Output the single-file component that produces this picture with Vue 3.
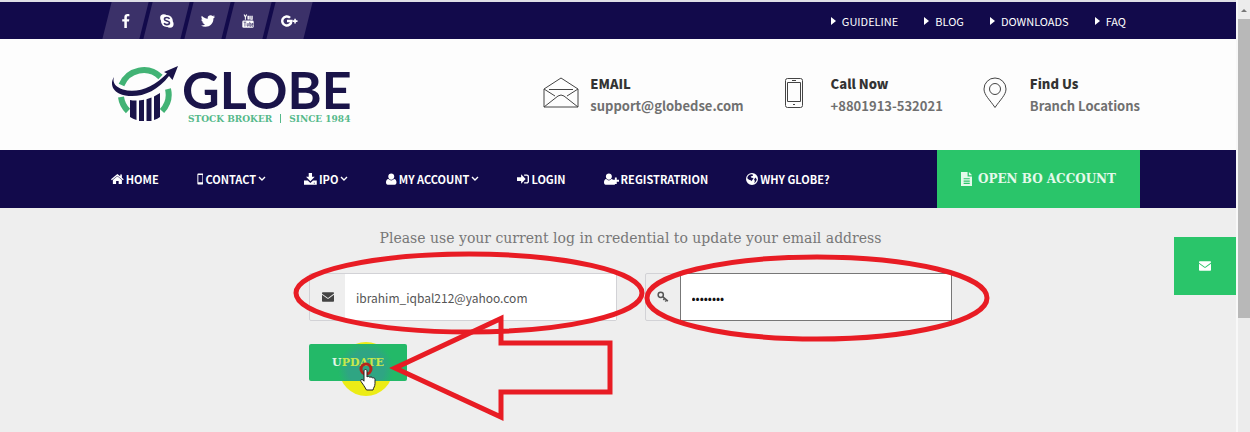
<script setup>
import { ref } from 'vue'

const email = ref('ibrahim_iqbal212@yahoo.com')
const password = ref('password')

const socials = [
  { name: 'Facebook', icon: 'facebook' },
  { name: 'Skype', icon: 'skype' },
  { name: 'Twitter', icon: 'twitter' },
  { name: 'YouTube', icon: 'youtube' },
  { name: 'Google Plus', icon: 'google' },
]

const topLinks = ['GUIDELINE', 'BLOG', 'DOWNLOADS', 'FAQ']

const menu = [
  { label: 'HOME', icon: 'home' },
  { label: 'CONTACT', icon: 'mobile', children: true },
  { label: 'IPO', icon: 'download', children: true },
  { label: 'MY ACCOUNT', icon: 'user', children: true },
  { label: 'LOGIN', icon: 'login' },
  { label: 'REGISTRATRION', icon: 'userplus' },
  { label: 'WHY GLOBE?', icon: 'globe' },
]

// [viewBox width, path], all 16 units tall
const icons = {
  facebook: [9, 'M8.600 .2v2.500H7.100c-1.200 0-1.400.6-1.400 1.400v1.800h2.800L8.100 8.700H5.700V16H2.800V8.700H.4V5.900h2.400V3.800C2.800 1.400 4.300.1 6.400.1c1 0 1.900.1 2.200.1z'],
  twitter: [16, 'M16 3.400c-.5.7-1 1.300-1.700 1.700.3 5-3.600 9.400-9.100 9.400-1.900 0-3.700-.5-5.200-1.500 1.800.2 3.500-.3 4.800-1.400-1.500 0-2.600-1-3.100-2.200.5.1 1 .1 1.500-.1C1.500 8.900.5 7.500.6 6c.4.3.9.400 1.500.4C.6 5.300.2 3.400 1.100 1.900c1.700 2 4 3.300 6.800 3.400C7.300 3 9 1.300 11.100 1.300c.9 0 1.800.4 2.400 1 .7-.1 1.500-.4 2.100-.8-.3.800-.8 1.400-1.500 1.800.7-.1 1.300-.2 1.900-.4z'],
  home: [17, 'M8.500 4.300 2.500 9.300v5.200h4.300v-4h3.400v4h4.300V9.300zM8.500 1.200 0 8.400l1.100 1.300 7.400-6.200 7.400 6.200L17 8.400l-2.500-2.200V2h-2.200v2.400z'],
  mobile: [9, 'M1.800.8h5.400c.7 0 1.300.6 1.300 1.300v11.800c0 .7-.6 1.300-1.300 1.300H1.800c-.7 0-1.300-.6-1.300-1.300V2.100C.5 1.400 1.100.8 1.800.8zm0 2v9.400h5.400V2.800z'],
  download: [17, 'M6.300 0h4.400v5h3.600L8.500 11 2.700 5h3.600zM0 10h5l3.500 3.200L12 10h5v5.500H0zm13 3v1h1.500v-1z'],
  user: [14, 'M7 .5c2.400 0 4 1.700 4 4S9.400 9 7 9 3 6.900 3 4.500s1.600-4 4-4zM3.300 8c1 1.200 2.300 1.900 3.700 1.900S9.700 9.200 10.700 8c2.500.2 3.300 2.400 3.300 4.700 0 1.700-.8 2.800-2.400 2.800H2.400C.8 15.500 0 14.400 0 12.700 0 10.400.8 8.200 3.300 8z'],
  userplus: [20, 'M6.500.5c2.300 0 4 1.700 4 4S8.800 9 6.500 9s-4-2.100-4-4.500 1.700-4 4-4zM3 8c1 1.200 2.100 1.900 3.500 1.900S9 9.200 10 8c.6 0 1 .2 1.500.5v3h3v4H2.200C.8 15.500 0 14.200 0 12.700 0 10.400.8 8.200 3 8zm11.500-2H17v3h3v2.500h-3v3h-2.500v-3h-3V9h3z'],
  login: [16, 'M5.500 1.800 11.500 8l-6 6.200V10.500H0v-5h5.500zM9.500 2H13c1.700 0 3 1.200 3 2.800v6.400c0 1.600-1.300 2.800-3 2.800H9.500v-1.800H13c.7 0 1.200-.4 1.200-1V4.800c0-.6-.5-1-1.200-1H9.500z'],
  globe: [16, 'M8 0a8 8 0 1 1 0 16A8 8 0 0 1 8 0zM4.500 2.300C3 3.500 1.900 5 1.700 7l2.300 2 2.300.5.500 1.500 1.700-1.600 1.600-2.600-2.600-.6-1.400-1.200 1.700-1 1.600-.5-.4-1.500L7 1.600zM12.500 6l-1.700 2.500 1 2.300-.8 2.800c1.600-1.100 3.100-3 3.300-5.300z'],
  file: [13, 'M0 0h7.500v5H13v11H0zM9 0l4 3.800H9zM3 7v1.300h7V7zm0 2.700V11h7V9.700zm0 2.600v1.300h7v-1.300z'],
  mail: [16, 'M0 2.600C0 2 .5 1.800 1 1.800h14c.6 0 1 .3 1 .8v.8L8 9.200 0 3.500zM0 5l6.900 5c.7.5 1.500.5 2.200 0L16 5v8.200c0 .6-.4 1-1 1H1c-.6 0-1-.4-1-1z'],
}
</script>

<template>
  <div class="page">
    <div class="site">
      <div class="topbar container">
        <nav class="socials" aria-label="Social">
          <a v-for="s in socials" :key="s.name" href="#" class="social" :aria-label="s.name">
            <svg v-if="icons[s.icon]" class="icon" :viewBox="`0 0 ${icons[s.icon][0]} 16`">
              <path :d="icons[s.icon][1]" />
            </svg>
            <svg v-else-if="s.icon === 'skype'" class="icon" viewBox="0 0 16 16">
              <circle cx="8" cy="8" r="6.800" /><circle cx="4.500" cy="4.500" r="4.200" /><circle cx="11.500" cy="11.500" r="4.200" />
              <path class="cut" d="M11 5.600C10.500 4.500 9.500 4 8 4 6.300 4 5.200 4.700 5.200 5.900 5.200 8.500 11 7.300 11 10c0 1.300-1.300 2.100-3 2.100-1.600 0-2.700-.7-3.100-1.900" />
            </svg>
            <svg v-else-if="s.icon === 'youtube'" class="icon" viewBox="0 0 14 16">
              <path class="line" d="M2.500.5 4 3.500 5.500.5M4 3.500v3M7 2.500h1.300v3.300H7zM10.200 2v4h1.600V2" />
              <rect x=".5" y="7.500" width="13" height="8.300" rx="1.500" />
              <path class="cut thin" d="M2 9.300h3M3.500 9.300v5M6 10.500v3.300h1.300v-3.300M9 9v5h1.300v-3H9M12.800 12.300h-1.300v-1.500h1.200v1.500M11.500 12v2h1.300" />
            </svg>
            <svg v-else class="icon" viewBox="0 0 20 16">
              <path class="gplus" d="M10.500 4.300A5.200 5.200 0 1 0 12 8H7" />
              <path d="M15.300 5.300h1.800v1.900H19V9h-1.900v1.900h-1.800V9h-1.900V7.200h1.900z" />
            </svg>
          </a>
        </nav>
        <nav class="top-links" aria-label="Quick links">
          <a v-for="link in topLinks" :key="link" href="#">
            <svg class="caret" viewBox="0 0 5 8"><path d="M0 0l5 4-5 4z" /></svg>{{ link }}
          </a>
        </nav>
      </div>

      <header class="header container">
        <a href="#" class="logo" aria-label="Globe Stock Broker">
          <svg class="logo-mark" viewBox="0 0 68 58">
            <path class="ring" d="M10.500 20A24 24 0 0 1 49.500 12M57 24A24 24 0 0 1 51 46M10 32A24 24 0 0 0 17 46" />
            <path class="navy" d="M19 35q3 .6 6.500.5V55q-3.500-1-6.500-3zM28 35.500l5-.8V56h-5zM35.500 34.200l5-1.700V56h-5zM43 31.500l6-3.500v24q-2.500 2-6 3z" />
            <path class="navy" d="M3 12C-1 18 1 25 8 28.500c15 6.500 36 1 50-17.500l3.500 4L67 1 53 7l3 1.500C43 22 26 29 12 24.500 5 22 1 18 3 12z" />
          </svg>
          <span class="logo-text">
            <span class="logo-name">GLOBE</span>
            <span class="logo-tag">STOCK BROKER <i></i> SINCE 1984</span>
          </span>
        </a>
        <div class="contacts">
          <div class="contact">
            <svg class="contact-icon" viewBox="0 0 36 32">
              <path d="M1 12 18 1l17 11v18H1zM1 12l11 7M35 12l-11 7M1 30l14-11q3-2 6 0l14 11M6 12.500h24" />
            </svg>
            <div><strong>EMAIL</strong><span>support@globedse.com</span></div>
          </div>
          <div class="contact">
            <svg class="contact-icon" viewBox="0 0 20 32">
              <rect x="1.500" y="1.500" width="17" height="29" rx="2" />
              <path d="M3.500 5.500h13v19h-13zM8 3.500h4M9 27.500h2" />
            </svg>
            <div><strong>Call Now</strong><span>+8801913-532021</span></div>
          </div>
          <div class="contact">
            <svg class="contact-icon" viewBox="0 0 24 32">
              <path d="M12 30.500C7 23 1 18 1 12a11 11 0 0 1 22 0c0 6-6 11-11 18.500z" />
              <circle cx="12" cy="12" r="5.500" />
            </svg>
            <div><strong>Find Us</strong><a href="#">Branch Locations</a></div>
          </div>
        </div>
      </header>

      <div class="navbar container">
        <nav class="menu" aria-label="Main">
          <a v-for="item in menu" :key="item.label" href="#">
            <svg class="icon" :viewBox="`0 0 ${icons[item.icon][0]} 16`"><path :d="icons[item.icon][1]" /></svg>
            {{ item.label }}
            <svg v-if="item.children" class="chevron" viewBox="0 0 8 6"><path d="M1 1l3 3 3-3" /></svg>
          </a>
        </nav>
        <a href="#" class="open-account">
          <svg class="icon" viewBox="0 0 13 16"><path :d="icons.file[1]" /></svg>
          OPEN BO ACCOUNT
        </a>
      </div>

      <main class="main">
        <form class="form" @submit.prevent>
          <h1>Please use your current log in credential to update your email address</h1>
          <div class="fields">
            <div class="field">
              <label for="email" aria-label="Email">
                <svg class="icon" viewBox="0 0 16 16"><path :d="icons.mail[1]" /></svg>
              </label>
              <input id="email" v-model="email" type="email" />
            </div>
            <div class="field focused">
              <label for="password" aria-label="Password">
                <svg class="icon key" viewBox="0 0 16 16"><circle cx="5" cy="5" r="3.500" /><path d="M7.500 7.500l7 6M10 10l-1.500 2M12.500 12l-1.500 2" /></svg>
              </label>
              <input id="password" v-model="password" type="password" />
            </div>
          </div>
          <div class="submit">
            <span class="click-halo"></span>
            <button type="submit">U<span>PDATE</span></button>
            <svg class="pointer" viewBox="0 0 20 30">
              <circle cx="8" cy="7" r="5" />
              <path d="M6 9c0-2 3-2 3 0v6c1-1 2.500-.7 2.800.4 1-.8 2.300-.4 2.600.6 1.100-.6 2.600 0 2.600 1.500v4c0 3-1.500 4-2 6.500H8.500C7 25 5 22.500 3 19.500c-1-1.800 1-2.700 2-1.500l1 1.200z" />
            </svg>
          </div>
        </form>
        <a href="#" class="mail-tab" aria-label="Send a message">
          <svg class="icon" viewBox="0 0 16 16"><path :d="icons.mail[1]" /></svg>
        </a>
        <!-- hand-drawn marks over the form -->
        <svg class="marks" viewBox="0 0 720 184" aria-hidden="true">
          <ellipse cx="189" cy="53" rx="173" ry="39" />
          <ellipse cx="537" cy="58" rx="170" ry="41" />
          <path d="M115 128 221 78.500V103H330V152H221V177z" />
        </svg>
      </main>
    </div>
    <div class="scrollbar" aria-hidden="true"><i class="arrow"></i><i class="thumb"></i></div>
  </div>
</template>

<style>
body {
  margin: 0;
  background: #eee;
}
</style>

<style scoped>
.page {
  display: flex;
  min-height: 100vh;
  font-family: 'Noto Sans CJK JP', 'Noto Sans', sans-serif;
  background: #eee;
}

a {
  color: inherit;
  text-decoration: none;
}

.site {
  flex: 1;
  min-width: 0;
  border-top: 2px solid #dedee6;
}

.container {
  display: flex;
  justify-content: space-between;
  padding: 0 96px 0 111px;
}

.icon {
  height: 12px;
  fill: currentColor;
}

.topbar {
  height: 37px;
  color: #fff;
  background: #120a4b;
}

.socials {
  display: flex;
  gap: 4px;
  margin-left: -4px;
}

.social {
  display: flex;
  align-items: center;
  justify-content: center;
  width: 37px;
  background: #3b3169;
  transform: skewX(-14deg);
}

.social .icon {
  height: 14px;
  transform: skewX(14deg);
}

.cut {
  fill: none;
  stroke: #3b3169;
  stroke-width: 1.8;
}

.thin {
  stroke-width: 0.8;
}

.line {
  fill: none;
  stroke: #fff;
  stroke-width: 1.2;
}

.gplus {
  fill: none;
  stroke: #fff;
  stroke-width: 2.8;
}

.top-links {
  display: flex;
  align-items: center;
  gap: 26px;
  padding-right: 14px;
  font-size: 11px;
}

.top-links a {
  display: flex;
  align-items: center;
  gap: 6px;
}

.caret {
  width: 5px;
  height: 8px;
  fill: #fff;
}

.header {
  align-items: center;
  height: 111px;
  background: #fdfdfd;
}

.logo {
  display: flex;
  gap: 3px;
}

.logo-mark {
  width: 68px;
  height: 58px;
}

.ring {
  fill: none;
  stroke: #42b375;
  stroke-width: 6;
}

.navy {
  fill: #1a1449;
}

.logo-text {
  display: flex;
  flex-direction: column;
}

.logo-name {
  font: 700 52px/48px Lato, sans-serif;
  color: #1a1449;
}

.logo-tag {
  display: flex;
  align-items: center;
  gap: 8px;
  padding-left: 6px;
  font: 700 9px/12px 'DejaVu Serif', serif;
  color: #55b98a;
}

.logo-tag i {
  height: 9px;
  border-left: 1px solid #55b98a;
}

.contacts {
  display: flex;
  gap: 40px;
}

.contact {
  display: grid;
  grid-template-columns: 47px auto;
  font-size: 13px;
  font-weight: 700;
  line-height: 22px;
  color: #707070;
}

.contact strong {
  display: block;
  color: #333;
}

.contact-icon {
  height: 32px;
  margin-top: 4px;
  fill: none;
  stroke: #444;
}

.navbar {
  height: 58px;
  align-items: center;
  color: #fff;
  background: #120a4b;
}

.menu {
  display: flex;
  gap: 38px;
  font-size: 11px;
  font-weight: 700;
}

.menu a {
  display: flex;
  align-items: center;
  gap: 2px;
}

.chevron {
  width: 8px;
  height: 6px;
  fill: none;
  stroke: #fff;
  stroke-width: 1.4;
}

.open-account {
  display: flex;
  align-items: center;
  align-self: stretch;
  gap: 6px;
  padding: 0 24px;
  font: 700 12px 'DejaVu Serif', serif;
  color: #e4f9ea;
  background: #2ac56a;
}

.open-account .icon {
  height: 14px;
}

.main {
  position: relative;
  padding: 19px 0 52px;
}

.form {
  max-width: 643px;
  margin-left: 309px;
}

h1 {
  margin: 0 0 24px;
  font: 14px/22px 'DejaVu Serif', serif;
  text-align: center;
  color: #777;
}

.fields {
  display: flex;
  gap: 28px;
}

.field {
  flex: 1;
  display: flex;
  height: 48px;
  box-sizing: border-box;
  border: 1px solid #d2d2d6;
  border-radius: 2px;
}

.field label {
  display: flex;
  align-items: center;
  justify-content: center;
  width: 35px;
  color: #444;
}

.field input {
  flex: 1;
  min-width: 0;
  padding: 0 11px;
  border: 0;
  outline: 0;
  font: 12px 'Noto Sans CJK JP', 'Noto Sans', sans-serif;
  color: #555;
  background: #fff;
}

.field.focused input {
  outline: 1px solid #777;
  color: #111;
}

.key {
  fill: none;
  stroke: #555;
  stroke-width: 2;
}

.submit {
  position: relative;
  display: flex;
  width: 98px;
  margin-top: 23px;
}

.submit button {
  position: relative;
  flex: 1;
  height: 37px;
  padding: 0;
  border: 0;
  border-radius: 2px;
  overflow: hidden;
  font: 700 11px 'DejaVu Serif', serif;
  color: #e4f5e6;
  background: radial-gradient(circle at 57px 25px, #2fa583 18px, #23b968 28px);
}

.submit button span {
  color: #c8e84c;
}

.click-halo {
  position: absolute;
  top: -2px;
  left: 30px;
  width: 54px;
  height: 54px;
  border-radius: 50%;
  background: #ecec16;
}

.pointer {
  position: absolute;
  top: 18px;
  left: 49px;
  width: 20px;
  height: 30px;
  fill: #fff;
  stroke: #222;
}

.pointer circle {
  fill: none;
  stroke: #b5261c;
  stroke-width: 3;
}

.mail-tab {
  position: absolute;
  top: 29px;
  right: 0;
  display: flex;
  align-items: center;
  justify-content: center;
  width: 62px;
  height: 58px;
  color: #fff;
  background: #2ac56a;
}

.marks {
  position: absolute;
  top: 32px;
  left: 280px;
  width: 720px;
  height: 184px;
  fill: none;
  stroke: #e81c24;
  stroke-width: 5;
  pointer-events: none;
}

.scrollbar {
  width: 12px;
  border-left: 2px solid #f8f8f8;
  background: #ececec;
}

.arrow {
  display: block;
  width: 0;
  margin: 9px 3px 7px;
  border: 3px solid transparent;
  border-top: 0;
  border-bottom-color: #777;
}

.thumb {
  display: block;
  height: 299px;
  background: #b8b8b8;
}
</style>
